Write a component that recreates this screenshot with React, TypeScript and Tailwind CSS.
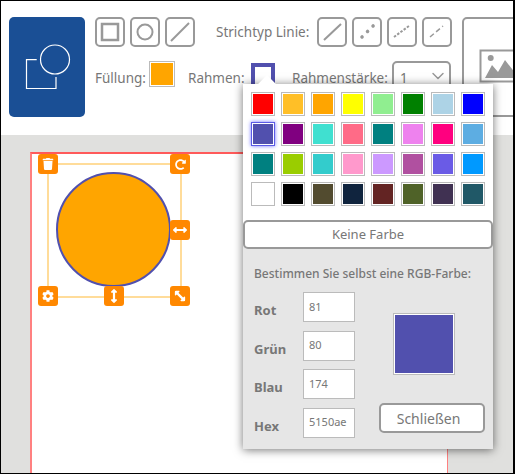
import React from "react";
import { FaTrash, FaRedoAlt, FaCog, FaArrowsAltH, FaArrowsAltV } from "react-icons/fa";
import { ChevronDown } from "lucide-react";

const swatches = [
    ["#ff0000", "#ffbf27", "#ffa500", "#ffff00", "#90ee90", "#008000", "#add3e6", "#0000ff"],
    ["#5150ae", "#800080", "#40e0d0", "#ff6b87", "#008080", "#ee82ee", "#ff007f", "#5dade2"],
    ["#008080", "#9acd00", "#33cccc", "#ff99cc", "#cc99ff", "#b050a0", "#6a5be6", "#0099ff"],
    ["#ffffff", "#000000", "#524b2f", "#10243e", "#632423", "#4f6228", "#403152", "#205867"],
];

const rgb = [
    { label: "Rot", value: "81" },
    { label: "Grün", value: "80" },
    { label: "Blau", value: "174" },
    { label: "Hex", value: "5150ae" },
];

function ToolButton({ children }: { children: React.ReactNode }) {
    return (
        <div className="w-[30px] h-[30px] shrink-0 rounded-[5px] border-2 border-[#999] flex items-center justify-center">
            <svg width="26" height="26" viewBox="0 0 26 26" fill="none" stroke="#999" strokeWidth="2">
                {children}
            </svg>
        </div>
    );
}

function Handle({ className, children }: { className: string; children: React.ReactNode }) {
    return (
        <div className={`absolute w-5 h-5 rounded-[3px] bg-[#ff8800] text-white flex items-center justify-center ${className}`}>
            {children}
        </div>
    );
}

export default function App() {
    return (
        <div className="relative w-[515px] h-[474px] overflow-hidden bg-[#e0e0de] border border-r-2 border-black font-['Noto_Sans',sans-serif] text-[#777]">
            {/* toolbar */}
            <div className="h-[134px] bg-white flex items-start pt-4 pl-2 gap-[10px] overflow-hidden text-[13.5px] whitespace-nowrap">
                <div className="w-[76px] h-[100px] shrink-0 rounded-[5px] bg-[#1a4f95] flex items-center justify-center">
                    <svg width="48" height="48" viewBox="0 0 48 48" fill="none" stroke="#fff" strokeWidth="1.2">
                        <circle cx="32" cy="16.5" r="14.5" />
                        <path d="M13.7 16.7H3.5V45.5H33V34" />
                    </svg>
                </div>
                <div className="w-[357px] shrink-0">
                    <div className="flex items-center gap-[5px]">
                        <ToolButton>
                            <rect x="5" y="5" width="16" height="16" strokeWidth="2.5" />
                        </ToolButton>
                        <ToolButton>
                            <circle cx="13" cy="13" r="7.5" />
                        </ToolButton>
                        <ToolButton>
                            <path d="M4 22L22 4" />
                        </ToolButton>
                        <span className="ml-[16px] mr-[2px] w-[96px]">Strichtyp Linie:</span>
                        <ToolButton>
                            <path d="M5 21L22 5" />
                        </ToolButton>
                        <ToolButton>
                            <path d="M8 18L19.5 6.5" strokeWidth="3.5" strokeLinecap="round" strokeDasharray="0.1 7.7" />
                        </ToolButton>
                        <ToolButton>
                            <path d="M5 18L20 7" strokeDasharray="2.5 1.5" />
                        </ToolButton>
                        <ToolButton>
                            <path d="M6 18L19 7" strokeWidth="1.5" strokeDasharray="5 3" />
                        </ToolButton>
                    </div>
                    <div className="flex items-start mt-[14px]">
                        <span className="w-[50px] pt-[7px]">Füllung:</span>
                        <div className="ml-[4px] w-[26px] h-[26px] border border-[#bbb] p-[1px] bg-white">
                            <div className="w-full h-full bg-[#ffa500]" />
                        </div>
                        <span className="ml-[13px] w-[56px] pt-[7px]">Rahmen:</span>
                        <div className="ml-[7px] mt-[2px] w-[24px] h-[26px] border-[4px] border-[#5150ae] bg-white" />
                        <span className="ml-[17px] w-[96px] pt-[7px]">Rahmenstärke:</span>
                        <div className="ml-[4px] w-[59px] h-[30px] rounded-[5px] border-2 border-[#999] pl-[6px] pr-[1px] flex items-center justify-between">
                            <span className="pt-[5px]">1</span>
                            <ChevronDown size={20} color="#999" strokeWidth={1.75} />
                        </div>
                    </div>
                </div>
                <div className="w-[60px] h-[100px] shrink-0 rounded-[5px] border-2 border-[#999] pl-[15px] pt-[30px]">
                    <svg width="46" height="34" viewBox="0 0 46 34" fill="none">
                        <rect x="1.5" y="1.5" width="43" height="31" stroke="#999" strokeWidth="2" />
                        <circle cx="11.7" cy="9" r="3" fill="#999" />
                        <path d="M6 29L13 16L19 23L26 11L40 29Z" fill="#999" />
                    </svg>
                </div>
            </div>

            {/* canvas */}
            <div className="absolute left-[29px] top-[151px] w-[418px] h-[340px] bg-white border-l-2 border-t-2 border-r border-l-[#ff8080] border-t-[#ff5a5a] border-r-[#ff8080]">
                <div className="absolute left-[15px] top-[9px] w-[135px] h-[135px] border-2 border-[#ffdc9a]" />
                <div className="absolute left-[24px] top-[18px] w-[115px] h-[115px] rounded-full bg-[#ffa500] border-2 border-[#5150ae]" />
                <Handle className="left-[6px] top-0">
                    <FaTrash size={12} />
                </Handle>
                <Handle className="left-[138px] top-0">
                    <FaRedoAlt size={11} />
                </Handle>
                <Handle className="left-[138px] top-[66px]">
                    <FaArrowsAltH size={14} />
                </Handle>
                <Handle className="left-[6px] top-[132px]">
                    <FaCog size={12} />
                </Handle>
                <Handle className="left-[72px] top-[132px]">
                    <FaArrowsAltV size={14} />
                </Handle>
                <Handle className="left-[138px] top-[132px]">
                    <FaArrowsAltH size={14} className="rotate-45" />
                </Handle>
            </div>

            {/* colour popover */}
            <div className="absolute left-[242px] top-[83px] w-[250px] h-[365px] bg-[#e6e6e6] shadow-[0_1px_9px_rgba(0,0,0,0.55)] text-[13px]">
                <div className="absolute left-[17px] -top-[6px] w-[14px] h-[14px] rotate-45 bg-white" />
                <div className="relative bg-white h-[150px] pt-2 pl-2 flex flex-col gap-[6px]">
                    {swatches.map((row, i) => (
                        <div key={i} className="flex gap-[6px]">
                            {row.map((color, j) => (
                                <div
                                    key={j}
                                    className={
                                        i === 1 && j === 0
                                            ? "w-6 h-6 border border-[#5a5ae6] p-[1px] bg-white shadow-[0_0_4px_#7070ff]"
                                            : "w-6 h-6 border border-[#bbb] p-[1px] bg-white"
                                    }
                                >
                                    <div className="w-full h-full" style={{ backgroundColor: color }} />
                                </div>
                            ))}
                        </div>
                    ))}
                </div>
                <div className="relative -mt-[14px] h-[29px] rounded-[5px] border-2 border-[#999] bg-white pt-[1px] flex items-center justify-center">
                    Keine Farbe
                </div>
                <div className="pl-[11px] pt-[16px] text-[12px] font-medium">Bestimmen Sie selbst eine RGB-Farbe:</div>
                <div className="flex pl-[11px] pt-[9px]">
                    <div className="w-[49px] shrink-0 flex flex-col gap-[8.5px] font-bold">
                        {rgb.map((item) => (
                            <div key={item.label} className="h-[30px] flex items-center pt-[8px]">
                                {item.label}
                            </div>
                        ))}
                    </div>
                    <div className="w-[52px] shrink-0 flex flex-col gap-[8.5px] text-[11px]">
                        {rgb.map((item) => (
                            <div key={item.label} className="h-[30px] border border-[#bbb] bg-white pl-[5px] flex items-center">
                                {item.value}
                            </div>
                        ))}
                    </div>
                    <div className="flex flex-col ml-[24px] pt-[21px]">
                        <div className="ml-[14px] w-[62px] h-[62px] border border-[#bbb] p-[1px] bg-white">
                            <div className="w-full h-full bg-[#5150ae]" />
                        </div>
                        <div className="mt-[28px] w-[106px] h-[30px] rounded-[5px] border-2 border-[#999] bg-white pr-[7px] pt-[1px] text-[14px] flex items-center justify-center">
                            Schließen
                        </div>
                    </div>
                </div>
            </div>
        </div>
    );
}
